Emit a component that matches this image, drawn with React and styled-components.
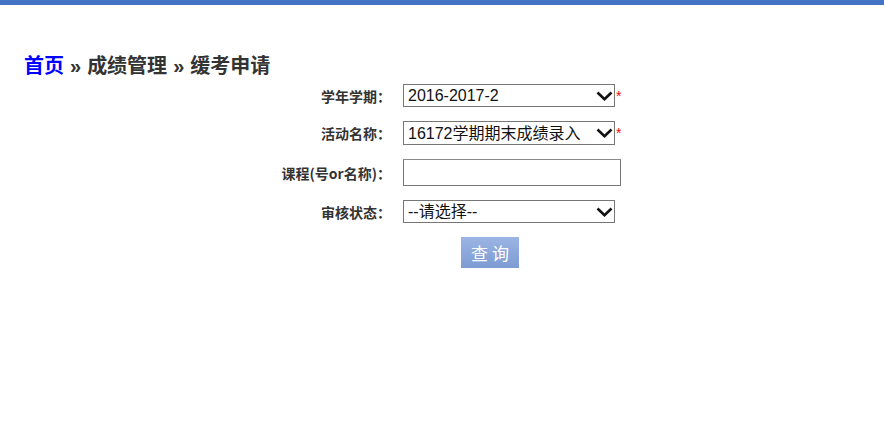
import React from "react";
import styled, { createGlobalStyle } from "styled-components";

const GlobalStyle = createGlobalStyle`
  body {
    margin: 0;
    background: #fff;
    font-family: "Liberation Sans", Arial, "Noto Sans CJK SC", sans-serif;
  }
`;

const TopBar = styled.div`
  height: 5px;
  background: #4472c4;
`;

const Crumbs = styled.div`
  padding: 48px 0 0 24px;
  font-size: 20px;
  font-weight: bold;
  color: #333;
  line-height: 26px;
  a {
    color: #0000ff;
    text-decoration: none;
  }
  span {
    margin: 0 6px;
  }
`;

const Form = styled.div`
  display: grid;
  grid-template-columns: 391px auto;
  column-gap: 12px;
  row-gap: 14px;
  align-items: center;
  margin-top: 5px;
`;

const Label = styled.label`
  justify-self: end;
  font-size: 14px;
  font-weight: bold;
  color: #333;
  font-family: "Noto Sans CJK SC", "Liberation Sans", sans-serif;
`;

const Field = styled.div`
  display: flex;
  align-items: center;
  height: ${(p) => p.$h || 23}px;
`;

const SelectWrap = styled.div`
  position: relative;
  width: 212px;
  height: ${(p) => p.$h || 23}px;
`;

const Select = styled.select`
  appearance: none;
  box-sizing: border-box;
  width: 100%;
  height: 100%;
  border: 1px solid #767676;
  background: #fff;
  padding: 0 0 0 4px;
  font-size: 16px;
  color: #111;
  font-family: "Liberation Sans", "Noto Sans CJK SC", sans-serif;
  border-radius: 0;
  outline: none;
`;

const Chevron = styled.svg`
  position: absolute;
  right: 2px;
  top: 50%;
  margin-top: -6px;
  pointer-events: none;
`;

const Star = styled.span`
  color: #ff0000;
  font-size: 14px;
  margin-left: 1px;
  align-self: flex-start;
  margin-top: 4px;
`;

const TextInput = styled.input`
  box-sizing: border-box;
  width: 218px;
  height: 27px;
  border: 1px solid #767676;
  border-top-color: #8a8a8a;
  padding: 0 4px;
  font-size: 16px;
  outline: none;
`;

const ButtonRow = styled.div`
  display: flex;
  padding-left: 461px;
  margin-top: 14px;
`;

const QueryButton = styled.button`
  width: 58px;
  height: 31px;
  border: none;
  background: linear-gradient(#9bb5e3, #7d9bd3);
  color: #fff;
  font-size: 17px;
  letter-spacing: 4px;
  padding: 0 0 0 4px;
  font-family: "Noto Sans CJK SC", sans-serif;
`;

const Dropdown = ({ value, options, h }) => (
  <SelectWrap $h={h}>
    <Select defaultValue={value}>
      {options.map((o) => (
        <option key={o}>{o}</option>
      ))}
    </Select>
    <Chevron width="17" height="12" viewBox="0 0 17 12">
      <path d="M1.5 2.5 L8.5 9.2 L15.5 2.5" fill="none" stroke="#111" strokeWidth="2.6" />
    </Chevron>
  </SelectWrap>
);

const App = () => {
  return (
    <>
      <GlobalStyle />
      <TopBar />
      <Crumbs>
        <a href="#">首页</a>
        <span>»</span>成绩管理<span>»</span>缓考申请
      </Crumbs>
      <Form>
        <Label>学年学期：</Label>
        <Field>
          <Dropdown value="2016-2017-2" options={["2016-2017-2", "2016-2017-1"]} />
          <Star>*</Star>
        </Field>
        <Label>活动名称：</Label>
        <Field $h={24}>
          <Dropdown h={24} value="16172学期期末成绩录入" options={["16172学期期末成绩录入"]} />
          <Star>*</Star>
        </Field>
        <Label>课程(号or名称)：</Label>
        <Field $h={27}>
          <TextInput type="text" />
        </Field>
        <Label>审核状态：</Label>
        <Field>
          <Dropdown value="--请选择--" options={["--请选择--", "待审核", "已通过", "未通过"]} />
        </Field>
      </Form>
      <ButtonRow>
        <QueryButton>查询</QueryButton>
      </ButtonRow>
    </>
  );
};

export default App;
